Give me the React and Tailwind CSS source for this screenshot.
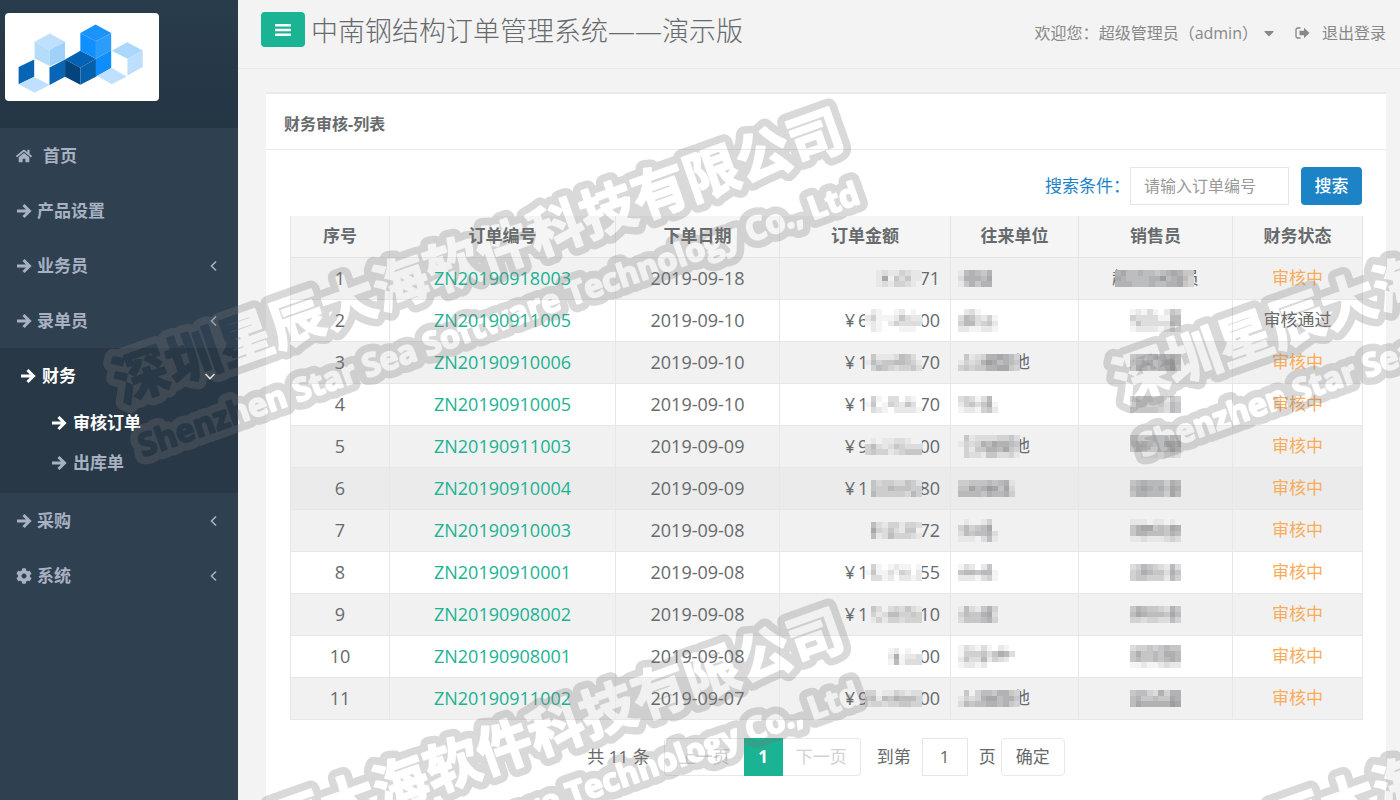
import React from 'react'
import clsx from 'clsx'
import { FaHome, FaCog, FaCaretDown } from 'react-icons/fa'

const ORDERS = [
  {
    no: 'ZN20190918003', date: '2019-09-18', prefix: '', suffix: '71', status: '审核中',
    amount: ['0012113211', '0017042411', '0012133210'],
    client: ['1565460', '2666570', '1464660'],
    seller: ['67556554567644', '76555566856753', '66655565566743'],
    sellerWide: true,
  },
  {
    no: 'ZN20190911005', date: '2019-09-10', prefix: '6', suffix: '00', status: '审核通过',
    amount: ['0210012010', '2411125322', '1210243333', '0210001110'],
    client: ['0231000', '3653241', '4663452', '2211221'],
    seller: ['121310254', '433331166', '253333376', '122221242'],
  },
  {
    no: 'ZN20190910006', date: '2019-09-10', prefix: '1', suffix: '70', status: '审核中',
    amount: ['0411125420', '1534455431', '0354323342'],
    client: ['04123667653', '13236875654', '34344667743'], tail: '他',
    seller: ['455675676', '566756786', '476556685'],
  },
  {
    no: 'ZN20190910005', date: '2019-09-10', prefix: '1', suffix: '70', status: '审核中',
    amount: ['0410330210', '1501432530', '0321022221'],
    client: ['3431360', '2453571', '1221452'],
    seller: ['465544254', '255445365', '455554365'],
  },
  {
    no: 'ZN20190911003', date: '2019-09-09', prefix: '9', suffix: '00', status: '审核中',
    amount: ['0101122100', '3521243222', '3433123444'],
    client: ['04122223342', '13236576654', '03144665743', '03221442231'], tail: '他',
    seller: ['444455465', '567655787', '465445575', '001110232'],
  },
  {
    no: 'ZN20190910004', date: '2019-09-09', prefix: '1', suffix: '80', status: '审核中', hover: true,
    amount: ['0423322431', '0433544433', '0533333253'],
    client: ['3344454561', '4475687472', '5555465563'],
    seller: ['456555365', '567656476', '466555375'],
  },
  {
    no: 'ZN20190910003', date: '2019-09-08', prefix: '', suffix: '72', status: '审核中',
    amount: ['0521331332', '0732421440', '0512533321'],
    client: ['0100130', '3534570', '2545562', '1110251'],
    seller: ['111011010', '467745476', '466555465', '112111232'],
  },
  {
    no: 'ZN20190910001', date: '2019-09-08', prefix: '1', suffix: '55', status: '审核中',
    amount: ['0410121101', '1511314302', '0331202212'],
    client: ['1320250', '5665661', '2221341'],
    seller: ['346543263', '457655375', '455444264'],
  },
  {
    no: 'ZN20190908002', date: '2019-09-08', prefix: '1', suffix: '10', status: '审核中',
    amount: ['0420232421', '0312553343', '0131332333'],
    client: ['1521463', '3544672', '2444563'],
    seller: ['465443264', '576555475', '332332253'],
  },
  {
    no: 'ZN20190908001', date: '2019-09-08', prefix: '', suffix: '00', status: '审核中',
    amount: ['0000120100', '0000271223', '0000161333'],
    client: ['1321310210', '1444535763', '2533624320', '1221200000'],
    seller: ['344545655', '575565776', '565565676', '112112322'],
  },
  {
    no: 'ZN20190911002', date: '2019-09-07', prefix: '9', suffix: '00', status: '审核中',
    amount: ['3301132122', '4515465553', '2332334433'],
    client: ['04035546643', '13236775664', '25455665643'], tail: '他',
    seller: ['455326366', '564454476', '576666687'],
  },
]

const COLUMNS = ['序号', '订单编号', '下单日期', '订单金额', '往来单位', '销售员', '财务状态']

// pixelated block that hides private values, each digit is a darkness level
function Mosaic({ rows, className }) {
  const cols = rows[0].length
  return (
    <svg
      className={clsx('relative shrink-0 bg-inherit', className)}
      width={Math.round((cols * 17) / 3)}
      height={Math.round((rows.length * 17) / 3)}
      viewBox={`0 0 ${cols} ${rows.length}`}
      preserveAspectRatio="none"
      shapeRendering="crispEdges"
      aria-hidden="true"
    >
      {rows.map((row, y) =>
        row.split('').map((level, x) => (
          <rect key={`${x}-${y}`} x={x} y={y} width="1" height="1" fill="#66676b" fillOpacity={Number(level) * 0.075} />
        ))
      )}
    </svg>
  )
}

function Logo() {
  return (
    <svg viewBox="13 39 464 266" className="block w-full" aria-hidden="true">
      <path d="M148 101l46 25-46 24-46-24z" fill="#bfe0fc" />
      <path d="M102 126l46 24v49l-46-23z" fill="#b5dcfb" />
      <path d="M148 150l46-24v52l-46 21z" fill="#a0d1fa" />
      <path d="M54 202l47-23v52l-47 23z" fill="#0864b4" />
      <path d="M54 254l47-22 47 24-46 23z" fill="#bfe1ff" />
      <path d="M147 203l47-24v52l-47 25z" fill="#0864b4" />
      <path d="M194 179l46-26 47 24-47 27z" fill="#0561b2" />
      <path d="M194 179l46 25v51l-46-24z" fill="#04437c" />
      <path d="M240 204l47-27v54l-47 24z" fill="#055faa" />
      <path d="M240 99l46-25 47 25-46 25z" fill="#1b93f8" />
      <path d="M240 99l47 25v53l-47-24z" fill="#1090ff" />
      <path d="M287 124l46-25v53l-46 25z" fill="#2c9dfb" />
      <path d="M287 177l46-25v53l-46 26z" fill="#0d8efc" />
      <path d="M335 153l46-26 47 25-46 25z" fill="#a9d7fd" />
      <path d="M382 177l46-25v50l-46 25z" fill="#bddffd" />
      <path d="M290 228l45-23 45 25-45 24z" fill="#bfe1ff" />
    </svg>
  )
}

function ArrowIcon({ className }) {
  return (
    <svg className={className} viewBox="0 0 16 16" fill="none" stroke="currentColor" strokeWidth="3" aria-hidden="true">
      <path d="M1 8h12M7.500 2L13.500 8l-6 6" />
    </svg>
  )
}

function BarsIcon() {
  return (
    <svg className="h-3 w-4" viewBox="0 0 16 12" fill="currentColor" aria-hidden="true">
      <rect width="16" height="2.600" rx="0.500" />
      <rect y="4.700" width="16" height="2.600" rx="0.500" />
      <rect y="9.400" width="16" height="2.600" rx="0.500" />
    </svg>
  )
}

function Chevron({ open }) {
  return (
    <svg className={clsx('ml-auto h-3 w-3', open ? 'mr-[22px]' : 'mr-[18px]')} viewBox="0 0 12 12" fill="none" stroke="currentColor" strokeWidth="1.600">
      <path d={open ? 'M1.500 4l4.500 4.500L10.500 4' : 'M8 1.500L3.500 6 8 10.500'} />
    </svg>
  )
}

function SignOutIcon() {
  return (
    <svg className="h-[14px] w-[15px]" viewBox="0 0 15 14" aria-hidden="true">
      <path d="M5.500 2H3a2 2 0 0 0-2 2v6a2 2 0 0 0 2 2h2.500" fill="none" stroke="currentColor" strokeWidth="1.300" />
      <path d="M14.500 7L9 1.800v3H4.500v4.400H9v3z" fill="currentColor" />
    </svg>
  )
}

function NavItem({ icon: Icon, label, arrow, wide }) {
  return (
    <li>
      <a href="#" className="flex h-[55px] items-center pl-4">
        <Icon className="h-4 w-4" />
        <span className={wide ? 'ml-[11px]' : 'ml-[5px]'}>{label}</span>
        {arrow && <Chevron />}
      </a>
    </li>
  )
}

function Sidebar() {
  return (
    <aside className="w-[238px] shrink-0 bg-[#2f4050] text-[17px] font-semibold text-[#a7b1c2]">
      <div className="h-32 bg-linear-to-b from-[#293c4c] to-[#243544] pt-[13px] pl-[5px]">
        <div className="w-[154px] overflow-hidden rounded-sm bg-white">
          <Logo />
        </div>
      </div>
      <nav>
        <ul>
          <NavItem icon={FaHome} label="首页" wide />
          <NavItem icon={ArrowIcon} label="产品设置" />
          <NavItem icon={ArrowIcon} label="业务员" arrow />
          <NavItem icon={ArrowIcon} label="录单员" arrow />
          <li className="bg-[#293846] pb-[10px]">
            <a href="#" className="flex h-[55px] items-center pl-5 text-white">
              <ArrowIcon className="h-4 w-4" />
              <span className="ml-[6px]">财务</span>
              <Chevron open />
            </a>
            <ul>
              <li>
                <a href="#" className="flex h-10 items-center pl-[51px] text-white">
                  <ArrowIcon className="h-4 w-4" />
                  <span className="ml-[6px]">审核订单</span>
                </a>
              </li>
              <li>
                <a href="#" className="flex h-10 items-center pl-[51px]">
                  <ArrowIcon className="h-4 w-4" />
                  <span className="ml-[6px]">出库单</span>
                </a>
              </li>
            </ul>
          </li>
          <NavItem icon={ArrowIcon} label="采购" arrow />
          <NavItem icon={FaCog} label="系统" arrow />
        </ul>
      </nav>
    </aside>
  )
}

function Header() {
  return (
    <header className="flex h-[69px] items-start border-b border-[#e7eaec] pt-3 pr-[14px] pl-[23px]">
      <button type="button" aria-label="菜单" className="flex h-[35px] w-11 items-center justify-center rounded bg-[#1ab394] text-white">
        <BarsIcon />
      </button>
      <h1 className="ml-[6px] text-[27px] leading-[38px] font-light">中南钢结构订单管理系统——演示版</h1>
      <div className="ml-auto flex h-[42px] items-center text-base text-[#888]">
        <span>欢迎您：</span>
        <button type="button" className="flex items-center">
          超级管理员（admin）
          <FaCaretDown className="ml-[3px] h-4 w-4" />
        </button>
        <a href="#" className="ml-[18px] flex items-center gap-3">
          <SignOutIcon />
          退出登录
        </a>
      </div>
    </header>
  )
}

function OrderTable() {
  return (
    <table className="w-full table-fixed border-collapse text-center text-[18px] leading-6">
      <colgroup>
        <col className="w-[99px]" />
        <col className="w-[226px]" />
        <col className="w-[164px]" />
        <col className="w-[171px]" />
        <col className="w-[128px]" />
        <col className="w-[154px]" />
        <col className="w-[130px]" />
      </colgroup>
      <thead>
        <tr className="h-[41px] bg-[#f5f5f6] text-[17px]">
          {COLUMNS.map(name => (
            <th key={name} scope="col" className="border-x border-b border-[#e4e4e5] p-0 font-bold">{name}</th>
          ))}
        </tr>
      </thead>
      <tbody>
        {ORDERS.map((o, i) => (
          <tr key={o.no} className={clsx('h-[42px] *:border *:border-[#e7e7e7] *:bg-inherit *:p-0', o.hover ? 'bg-[#ebebeb]' : i % 2 ? 'bg-white' : 'bg-[#f1f1f1]')}>
            <td>{i + 1}</td>
            <td><a href="#" className="text-[#1ab394]">{o.no}</a></td>
            <td>{o.date}</td>
            <td>
              <div className="flex items-center justify-end bg-inherit pr-[10px]">
                {o.prefix && <span>¥</span>}
                {o.prefix && <span className="ml-[3px]">{o.prefix}</span>}
                <Mosaic rows={o.amount} className="-mr-[3px] -ml-[3px]" />
                <span>{o.suffix}</span>
              </div>
            </td>
            <td>
              <div className="flex items-center bg-inherit pl-[7px] text-[17px]">
                <Mosaic rows={o.client} className="z-10" />
                {o.tail && <span className="-ml-[7px]">{o.tail}</span>}
              </div>
            </td>
            <td>
              <div className="flex items-center justify-center bg-inherit text-[17px]">
                {o.sellerWide && <span>超</span>}
                <Mosaic rows={o.seller} className={clsx('z-10', o.sellerWide && '-mr-3 -ml-[14px]')} />
                {o.sellerWide && <span>员</span>}
              </div>
            </td>
            <td className={clsx('text-[17px]', o.status === '审核中' && 'text-[#f8ac59]')}>{o.status}</td>
          </tr>
        ))}
      </tbody>
    </table>
  )
}

function Pagination() {
  return (
    <div className="mt-[17px] flex h-10 items-center justify-center text-[17px]">
      <span className="mr-[14px]">共 11 条</span>
      <button type="button" disabled className="h-[38px] rounded-l border border-r-0 border-[#e8e8e8] px-[14px] text-[#d2d2d2]">上一页</button>
      <button type="button" className="h-[38px] w-[39px] bg-[#1ab394] font-bold text-white">1</button>
      <button type="button" disabled className="h-[38px] rounded-r border border-l-0 border-[#e8e8e8] px-[13px] text-[#d2d2d2]">下一页</button>
      <label htmlFor="page" className="ml-4">到第</label>
      <input id="page" defaultValue="1" className="mx-[11px] h-[38px] w-[46px] border border-[#e5e6e7] bg-white text-center" />
      <span>页</span>
      <button type="button" className="ml-[5px] h-[38px] rounded border border-[#e7eaec] px-[14px]">确定</button>
    </div>
  )
}

const MARKS = [[0, 0], [1000, 0], [0, 500], [1000, 500]]

function MarkText(props) {
  return (
    <g transform="rotate(-19.5)" textAnchor="middle" fontWeight="700" strokeLinejoin="round" {...props}>
      <text y="-12" fontSize="55">深圳星辰大海软件科技有限公司</text>
      <text x="-2" y="46" fontSize="32">Shenzhen Star Sea Software Technology Co., Ltd</text>
    </g>
  )
}

// company stamp, hollow letters inside a soft grey outline
function Watermark() {
  return (
    <svg className="pointer-events-none fixed inset-0 z-20 h-full w-full" aria-hidden="true">
      <defs>
        <mask id="hollow" maskUnits="userSpaceOnUse" x="-500" y="-400" width="1000" height="800">
          <MarkText fill="#fff" stroke="#fff" strokeWidth="17" />
          <MarkText fill="#000" stroke="#000" strokeWidth="2" />
        </mask>
      </defs>
      {MARKS.map(([x, y]) => (
        <g key={`${x}-${y}`} transform={`translate(${x + 489} ${y + 286})`}>
          <rect x="-500" y="-400" width="1000" height="800" fill="#7a7578" fillOpacity="0.28" mask="url(#hollow)" />
        </g>
      ))}
    </svg>
  )
}

export default function App() {
  return (
    <div className="flex min-h-screen bg-[#f3f3f4] font-['Open_Sans','Noto_Sans_CJK_SC',sans-serif] text-[#676a6c]">
      <Sidebar />
      <div className="min-w-0 flex-1">
        <Header />
        <main className="pt-[23px] pr-[14px] pl-7">
          <section className="border-t-2 border-b border-[#e7eaec] bg-white">
            <h2 className="flex h-14 items-center border-b border-[#e7eaec] px-[18px] pt-1 text-base font-bold">财务审核-列表</h2>
            <div className="px-6 pt-[17px] pb-[23px]">
              <form className="mb-[11px] flex items-center justify-end" onSubmit={e => e.preventDefault()}>
                <label htmlFor="keyword" className="text-[17px] text-[#1c84c6]">搜索条件：</label>
                <input id="keyword" placeholder="请输入订单编号" className="h-[38px] w-[159px] border border-[#e5e6e7] bg-white px-[13px] text-base placeholder:text-[#999]" />
                <button type="submit" className="ml-3 h-[38px] w-[61px] rounded bg-[#1c84c6] text-[17px] font-medium text-white">搜索</button>
              </form>
              <OrderTable />
              <Pagination />
            </div>
          </section>
        </main>
      </div>
      <Watermark />
    </div>
  )
}
